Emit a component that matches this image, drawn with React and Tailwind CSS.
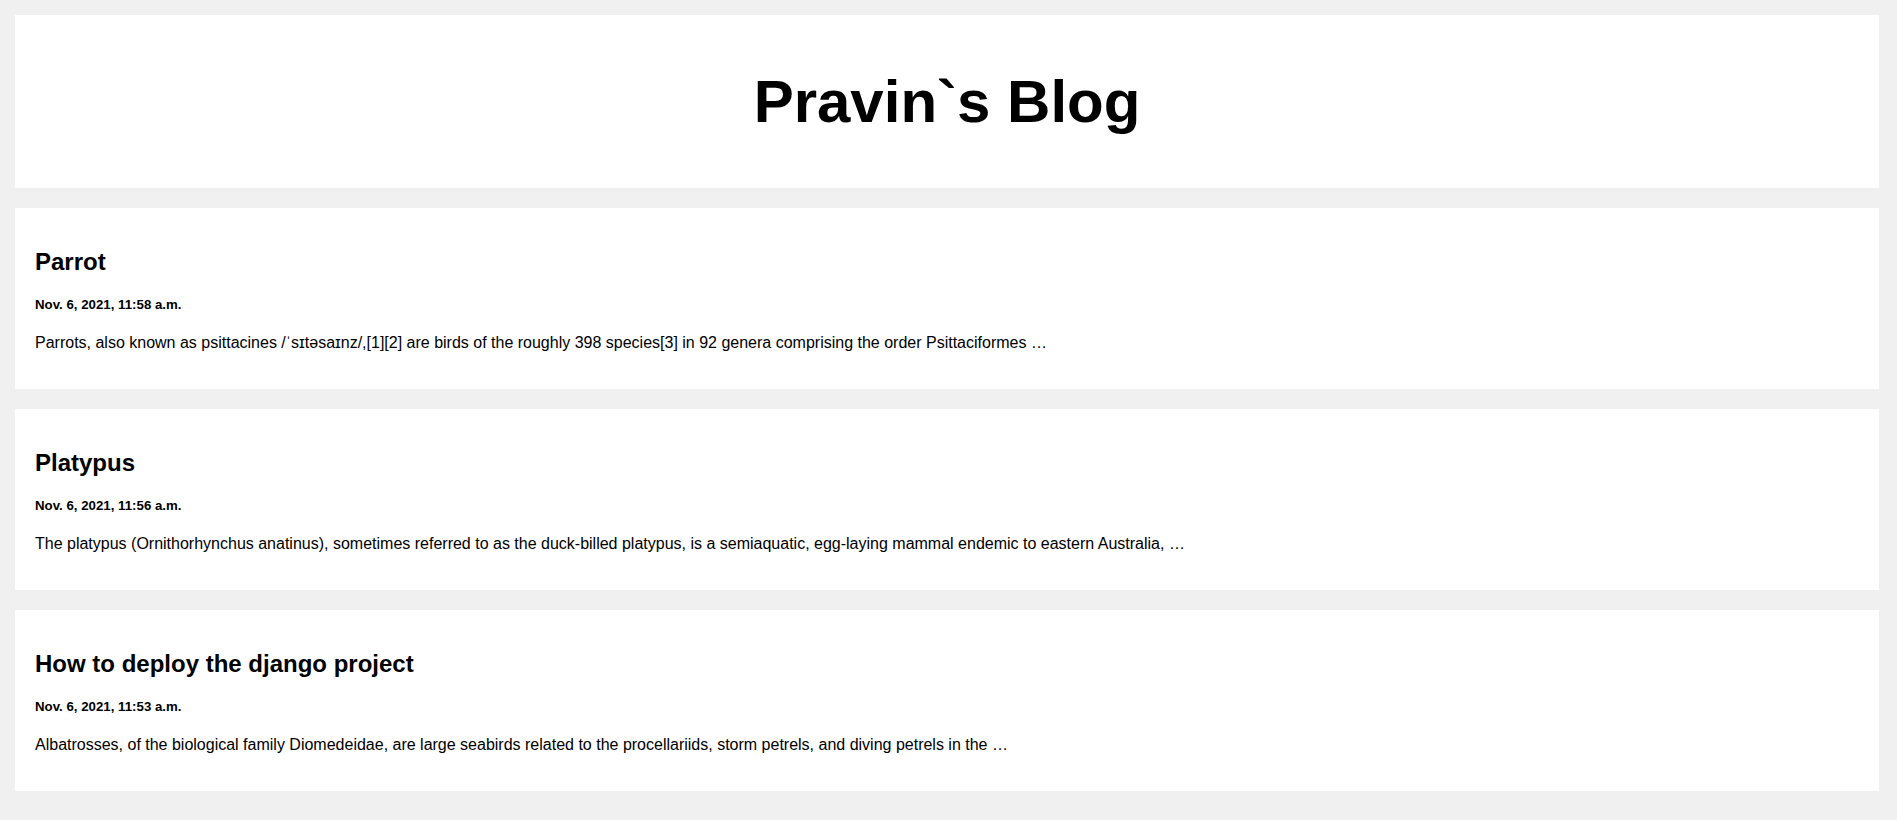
import React from "react";

const posts = [
  {
    title: "Parrot",
    date: "Nov. 6, 2021, 11:58 a.m.",
    body: "Parrots, also known as psittacines /ˈsɪtəsaɪnz/,[1][2] are birds of the roughly 398 species[3] in 92 genera comprising the order Psittaciformes …",
  },
  {
    title: "Platypus",
    date: "Nov. 6, 2021, 11:56 a.m.",
    body: "The platypus (Ornithorhynchus anatinus), sometimes referred to as the duck-billed platypus, is a semiaquatic, egg-laying mammal endemic to eastern Australia, …",
  },
  {
    title: "How to deploy the django project",
    date: "Nov. 6, 2021, 11:53 a.m.",
    body: "Albatrosses, of the biological family Diomedeidae, are large seabirds related to the procellariids, storm petrels, and diving petrels in the …",
  },
];

export default function App() {
  return (
    <div
      className="min-h-[820px] bg-[#f0f0f0] pt-[15px] pb-[29px] pl-[15px] pr-[18px] text-black"
      style={{ fontFamily: '"Liberation Sans", Arial, sans-serif' }}
    >
      <div className="flex h-[173px] items-center justify-center bg-white">
        <h1 className="text-[60px] font-bold leading-[68px]">Pravin`s Blog</h1>
      </div>
      <div className="mt-[20px] flex flex-col gap-[20px]">
        {posts.map((p) => (
          <div key={p.title} className="h-[181px] bg-white px-[20px] pt-[40px]">
            <h2 className="text-[24px] font-bold leading-[28px]">{p.title}</h2>
            <div className="mt-[21px] text-[13.28px] font-bold leading-[16px]">{p.date}</div>
            <p className="mt-[21px] text-[16px] leading-[18px]">{p.body}</p>
          </div>
        ))}
      </div>
    </div>
  );
}
